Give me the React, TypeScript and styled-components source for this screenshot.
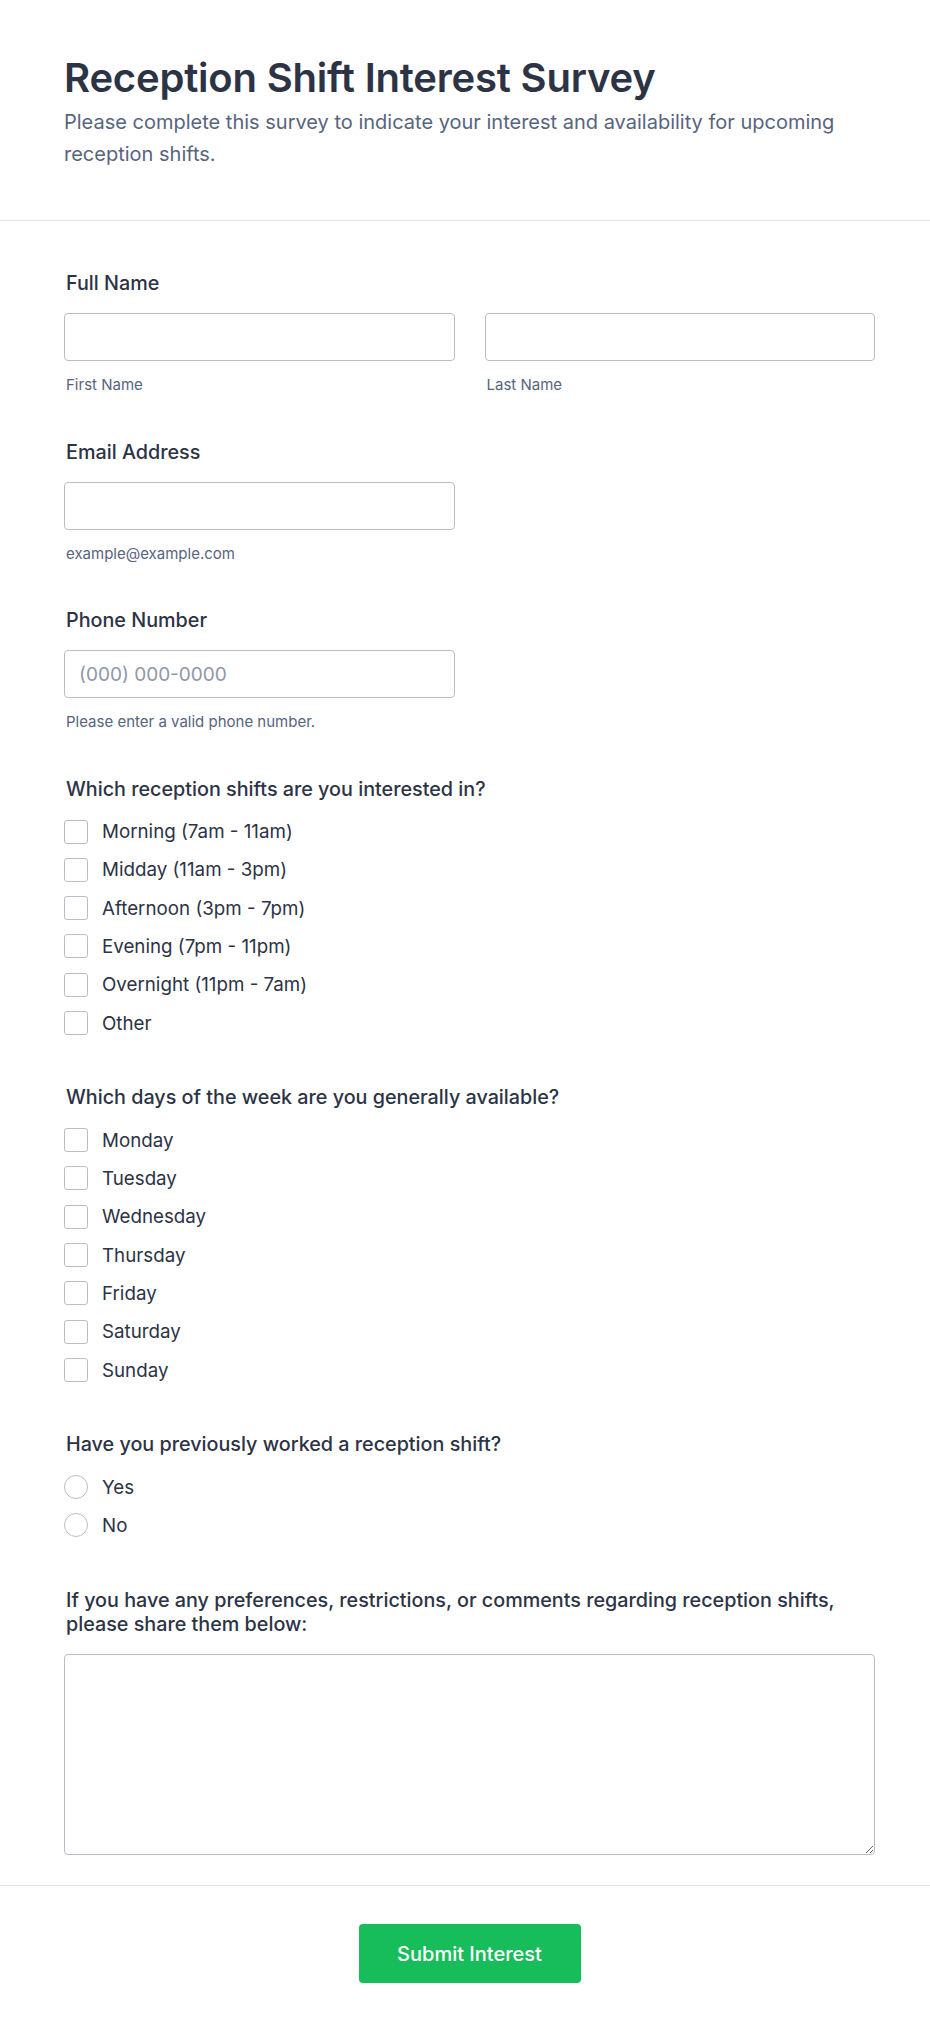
import React from 'react';
import styled, { createGlobalStyle } from 'styled-components';

const GlobalStyle = createGlobalStyle`
	* {
		box-sizing: border-box;
	}
	body {
		margin: 0;
		background: #ffffff;
		font-family: Inter, 'Liberation Sans', sans-serif;
		color: #2c3345;
	}
`;

const Page = styled.div`
	display: flex;
	flex-direction: column;
	min-height: 2033px;
	background: #ffffff;
`;

const Header = styled.header`
	padding: 54px 55px 50px 64px;
	border-bottom: 1px solid #e2e4ea;
`;

const Title = styled.h1`
	margin: 0;
	font-size: 40px;
	line-height: 48px;
	font-weight: 600;
	color: #2c3345;
	letter-spacing: -0.2px;
`;

const Subtitle = styled.p`
	margin: 4px 0 0;
	font-size: 20px;
	line-height: 32px;
	color: #57647e;
`;

const Form = styled.form`
	display: flex;
	flex-direction: column;
	gap: 44.5px;
	padding: 50px 55px 30px 64px;
`;

const Field = styled.div<{ $extra?: number }>`
	display: flex;
	flex-direction: column;
	padding-bottom: ${({ $extra }) => $extra || 0}px;
`;

const Label = styled.label`
	display: block;
	padding-left: 2px;
	margin-bottom: 18px;
	font-size: 19.75px;
	line-height: 24px;
	font-weight: 500;
	color: #2c3345;
`;

const Row = styled.div`
	display: grid;
	grid-template-columns: 1fr 1fr;
	column-gap: 30px;
`;

const InputWrap = styled.div`
	display: flex;
	flex-direction: column;
`;

const TextInput = styled.input`
	width: 100%;
	height: 48px;
	padding: 0 14px;
	border: 1px solid #b8bdc9;
	border-radius: 4px;
	background: #ffffff;
	font-family: inherit;
	font-size: 19px;
	color: #2c3345;
	outline: none;

	&::placeholder {
		color: #8f96a8;
	}
`;

const SubLabel = styled.span`
	display: block;
	margin-top: 14px;
	padding-left: 2px;
	font-size: 15px;
	line-height: 20px;
	color: #57647e;
`;

const OptionList = styled.div`
	display: flex;
	flex-direction: column;
	gap: 14.33px;
	margin-top: 1px;
`;

const Option = styled.label`
	display: flex;
	align-items: center;
	gap: 14px;
	height: 24px;
	font-size: 18.75px;
	color: #2c3345;
	cursor: pointer;
`;

const Box = styled.input<{ $round?: boolean }>`
	appearance: none;
	flex: none;
	width: 24px;
	height: 24px;
	margin: 0;
	border: 1px solid #b8bdc9;
	border-radius: ${({ $round }) => ($round ? '50%' : '3px')};
	background: #ffffff;
`;

const TextArea = styled.textarea`
	width: 100%;
	height: 201px;
	padding: 12px 14px;
	border: 1px solid #b8bdc9;
	border-radius: 4px;
	font-family: inherit;
	font-size: 19px;
	color: #2c3345;
	outline: none;
	resize: vertical;
`;

const Footer = styled.div`
	display: flex;
	justify-content: center;
	padding: 38px 55px 50px 64px;
	border-top: 1px solid #e2e4ea;
`;

const SubmitButton = styled.button`
	width: 222px;
	height: 59px;
	border: none;
	border-radius: 4px;
	background: #18bd5b;
	color: #ffffff;
	font-family: inherit;
	font-size: 20px;
	font-weight: 500;
	cursor: pointer;
`;

const shifts = [
	'Morning (7am - 11am)',
	'Midday (11am - 3pm)',
	'Afternoon (3pm - 7pm)',
	'Evening (7pm - 11pm)',
	'Overnight (11pm - 7am)',
	'Other',
];

const days = ['Monday', 'Tuesday', 'Wednesday', 'Thursday', 'Friday', 'Saturday', 'Sunday'];

const App = () => {
	return (
		<Page>
			<GlobalStyle />
			<Header>
				<Title>Reception Shift Interest Survey</Title>
				<Subtitle>
					Please complete this survey to indicate your interest and availability for upcoming reception shifts.
				</Subtitle>
			</Header>
			<Form onSubmit={(e) => e.preventDefault()}>
				<Field>
					<Label>Full Name</Label>
					<Row>
						<InputWrap>
							<TextInput type="text" />
							<SubLabel>First Name</SubLabel>
						</InputWrap>
						<InputWrap>
							<TextInput type="text" />
							<SubLabel>Last Name</SubLabel>
						</InputWrap>
					</Row>
				</Field>
				<Field>
					<Label>Email Address</Label>
					<Row>
						<InputWrap>
							<TextInput type="email" />
							<SubLabel>example@example.com</SubLabel>
						</InputWrap>
					</Row>
				</Field>
				<Field>
					<Label>Phone Number</Label>
					<Row>
						<InputWrap>
							<TextInput type="tel" placeholder="(000) 000-0000" />
							<SubLabel>Please enter a valid phone number.</SubLabel>
						</InputWrap>
					</Row>
				</Field>
				<Field $extra={5.5}>
					<Label>Which reception shifts are you interested in?</Label>
					<OptionList>
						{shifts.map((s) => (
							<Option key={s}>
								<Box type="checkbox" />
								{s}
							</Option>
						))}
					</OptionList>
				</Field>
				<Field $extra={5.5}>
					<Label>Which days of the week are you generally available?</Label>
					<OptionList>
						{days.map((d) => (
							<Option key={d}>
								<Box type="checkbox" />
								{d}
							</Option>
						))}
					</OptionList>
				</Field>
				<Field $extra={6.5}>
					<Label>Have you previously worked a reception shift?</Label>
					<OptionList>
						{['Yes', 'No'].map((o) => (
							<Option key={o}>
								<Box type="radio" name="worked" $round />
								{o}
							</Option>
						))}
					</OptionList>
				</Field>
				<Field>
					<Label>
						If you have any preferences, restrictions, or comments regarding reception shifts, please share them
						below:
					</Label>
					<TextArea />
				</Field>
			</Form>
			<Footer>
				<SubmitButton type="submit">Submit Interest</SubmitButton>
			</Footer>
		</Page>
	);
};

export default App;
